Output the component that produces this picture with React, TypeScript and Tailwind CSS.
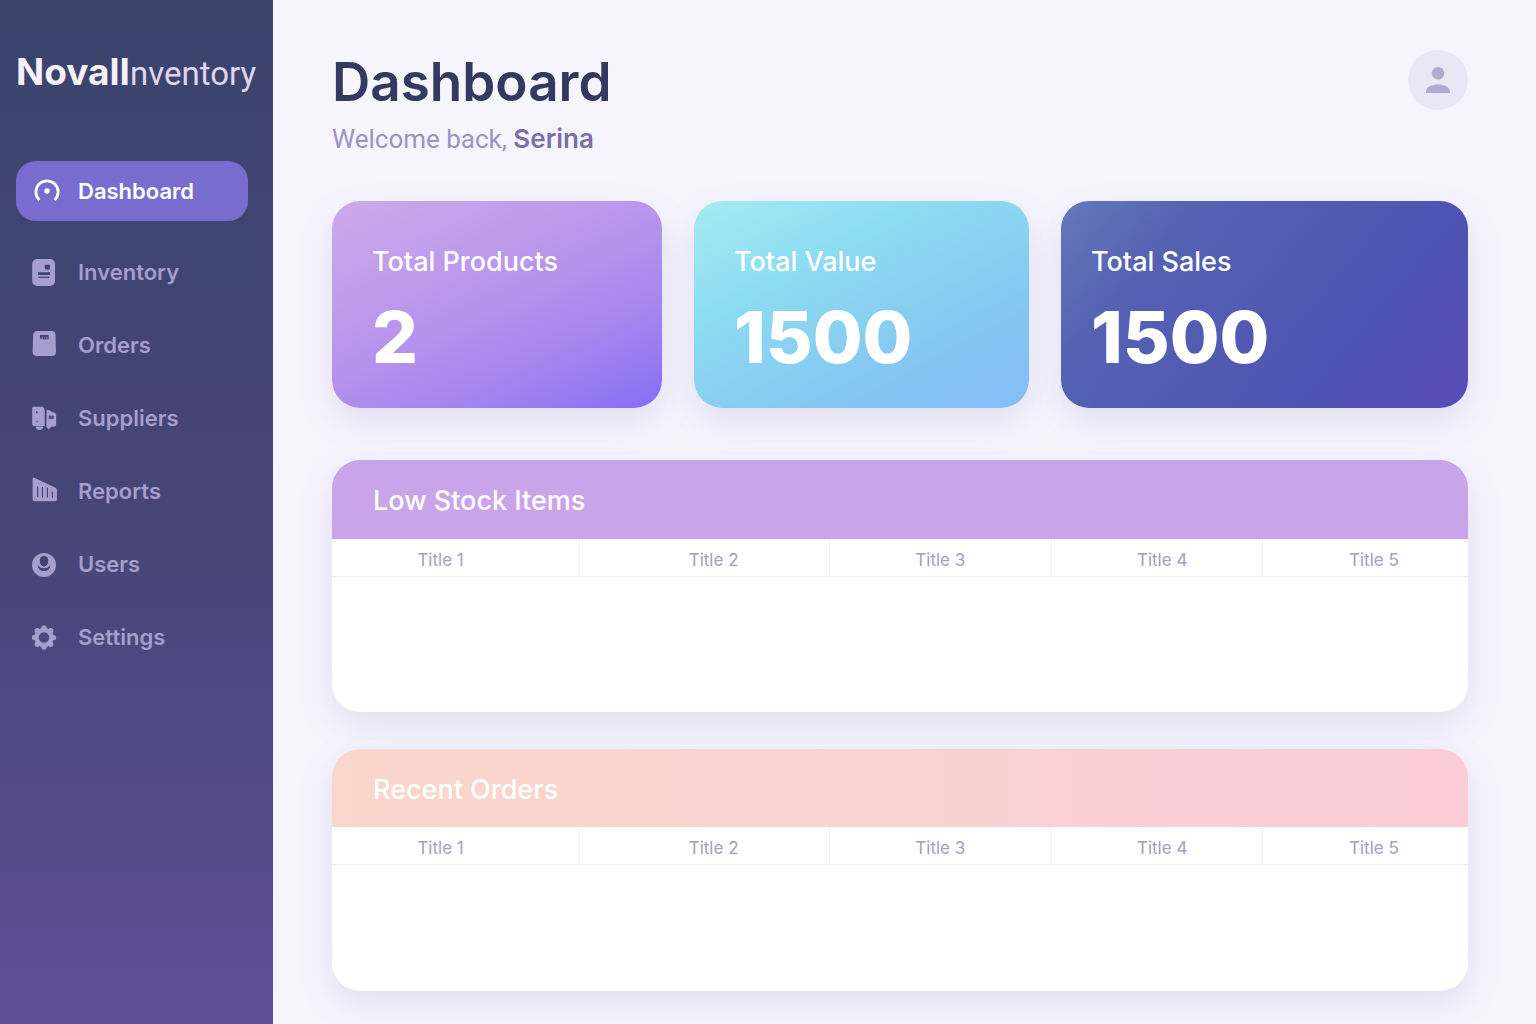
import React from "react";

type IconProps = { children: React.ReactNode };

function Icon({ children }: IconProps) {
  return (
    <svg viewBox="0 0 30 30" className="size-[30px] shrink-0" fill="currentColor" aria-hidden="true">
      {children}
    </svg>
  );
}

const HOLE = "#40416f";

const gearPoints = Array.from({ length: 8 }, (_, i) => {
  const a = (i * Math.PI) / 4;
  return { x: 12 + 9.6 * Math.sin(a), y: 15.5 - 9.6 * Math.cos(a) };
});

const navItems: { label: string; icon: React.ReactNode }[] = [
  {
    label: "Dashboard",
    icon: (
      <Icon>
        <path d="M7.4 24A11.1 11.1 0 1 1 22.6 24" fill="none" stroke="currentColor" strokeWidth="2.8" />
        <circle cx="15" cy="15" r="2.7" />
      </Icon>
    ),
  },
  {
    label: "Inventory",
    icon: (
      <Icon>
        <rect x="0.2" y="2" width="22.8" height="27" rx="5" />
        <rect x="12.8" y="7.8" width="5.2" height="4.6" rx="0.8" fill={HOLE} />
        <rect x="6" y="15.3" width="12" height="2.7" fill={HOLE} />
        <rect x="6.5" y="19.7" width="10.8" height="1.2" fill={HOLE} />
      </Icon>
    ),
  },
  {
    label: "Orders",
    icon: (
      <Icon>
        <path d="M5 1H20Q23.2 1 23.5 4.5L24 21.5Q24 26 19.5 26H5Q.6 26 .6 21.5L1.2 4.5Q1.5 1 5 1Z" />
        <path d="M8 5h8.6v4.4h-1.3V6.6h-.7v2.8h-1.5V6.6h-.6v2.8H11V6.6h-.6v2.5H9.2V7L8 9.4Z" fill={HOLE} />
      </Icon>
    ),
  },
  {
    label: "Suppliers",
    icon: (
      <Icon>
        <path d="M1.5 3.7H10Q12.7 4.4 12.7 7V23H2Q.2 23 .2 21V5Q.2 3.7 1.5 3.7Z" />
        <path d="M3.6 23.6H11.4Q11 27 7.5 27T3.6 23.6Z" />
        <path d="M14.6 6.8 18 7.4 19.4 8.8 23.2 10Q24.2 10.6 24.2 12V21.5Q24.2 23 22.6 23.4L19 23.8 16.8 26.6 14.4 24Z" />
        <rect x="16.9" y="12.6" width="1.9" height="3.3" rx="0.5" fill={HOLE} />
        <rect x="19.5" y="12.6" width="2.1" height="3.3" rx="0.5" fill={HOLE} />
        <circle cx="4.9" cy="9.2" r="0.9" fill={HOLE} />
        <circle cx="4.9" cy="18.6" r="0.6" fill={HOLE} />
      </Icon>
    ),
  },
  {
    label: "Reports",
    icon: (
      <Icon>
        <path d="M2.2 1.7 23.6 11.8Q24.9 12.4 24.9 13.8V23.5Q24.9 25.2 23.2 25.2H2.3Q.6 25.2 .6 23.5V3Q.6 1.3 2.2 1.7Z" />
        <path d="M5.6 10.3V21M10.5 11V21.4M15.4 11.6V21.4M20.3 15.8V21.8" fill="none" stroke={HOLE} strokeWidth="1.1" />
      </Icon>
    ),
  },
  {
    label: "Users",
    icon: (
      <Icon>
        <circle cx="12" cy="16" r="12" />
        <path d="M5.6 16.4Q8.4 19.2 12 19.2T18.4 16.4Q17.6 22 12 22T5.6 16.4Z" fill={HOLE} />
        <ellipse cx="12" cy="12.1" rx="4.3" ry="5.3" fill={HOLE} />
      </Icon>
    ),
  },
  {
    label: "Settings",
    icon: (
      <Icon>
        <circle cx="12" cy="15.5" r="7.5" fill="none" stroke="currentColor" strokeWidth="4.6" />
        {gearPoints.map((p, i) => (
          <circle key={i} cx={p.x} cy={p.y} r="2.6" />
        ))}
      </Icon>
    ),
  },
];

function Sidebar() {
  return (
    <aside className="flex w-[273px] shrink-0 flex-col bg-linear-to-b from-[#3a446b] via-[#464577] to-[#5e4e95] px-4 pt-[48px]">
      <div className="flex items-baseline whitespace-nowrap leading-[48px]">
        <span className="text-[37px] font-bold text-[#f6f1f8]">NovalI</span>
        <span className="font-['Roboto',sans-serif] text-[33px] font-normal text-[#ddd6ee]">nventory</span>
      </div>
      <nav className="mt-[63px] flex flex-col gap-[13px]" aria-label="Main">
        {navItems.map(({ label, icon }, i) => (
          <a
            key={label}
            href={`#${label.toLowerCase()}`}
            aria-current={i === 0 ? "page" : undefined}
            className={
              i === 0
                ? "mb-2 mr-[9px] flex h-[60px] items-center gap-4 rounded-[20px] bg-[#786dcf] px-4 text-[22px] font-semibold text-white"
                : "mr-[9px] flex h-[60px] items-center gap-4 px-4 text-[22px] font-semibold text-[#a69ecc]"
            }
          >
            {icon}
            {label}
          </a>
        ))}
      </nav>
    </aside>
  );
}

const stats = [
  {
    label: "Total Products",
    value: "2",
    look: "bg-[linear-gradient(155deg,#cdaaea_0%,#b795ec_45%,#a886ee_70%,#866ff5_100%)] pl-10",
  },
  {
    label: "Total Value",
    value: "1500",
    look: "bg-[linear-gradient(152deg,#a5ebf1_0%,#8cdcf2_32%,#88cff1_56%,#84c4f3_75%,#85bdf6_100%)] pl-10",
  },
  {
    label: "Total Sales",
    value: "1500",
    look: "bg-[linear-gradient(130deg,#6378ba_0%,#5562b3_24%,#4d53b2_72%,#5b4bb8_100%)] pl-[30px]",
  },
];

const columns = [
  { title: "Title 1", look: "w-[21.8%] pr-[30px]" },
  { title: "Title 2", look: "w-[22%] border-l pl-[18px]" },
  { title: "Title 3", look: "w-[19.5%] border-l" },
  { title: "Title 4", look: "w-[18.6%] border-l pl-[11px]" },
  { title: "Title 5", look: "border-l pl-[17px]" },
];

function Panel({ title, header, body }: { title: string; header: string; body: string }) {
  return (
    <section className="overflow-hidden rounded-[28px] bg-white shadow-[0_12px_36px_rgba(90,70,150,0.13)]">
      <h2 className={`px-[41px] text-[27px] font-medium text-white ${header}`}>{title}</h2>
      <table className="w-full table-fixed border-collapse" aria-label={title}>
        <thead>
          <tr className="h-[37px] border-b border-[#f0eff3]">
            {columns.map((c) => (
              <th
                key={c.title}
                scope="col"
                className={`border-[#f0eff3] pt-[6px] text-center text-[17px] leading-[30px] font-normal text-[#a49dc4] ${c.look}`}
              >
                {c.title}
              </th>
            ))}
          </tr>
        </thead>
        <tbody>
          <tr className={body}>
            <td colSpan={5} />
          </tr>
        </tbody>
      </table>
    </section>
  );
}

export default function App() {
  return (
    <div className="flex min-h-screen bg-[#f6f5fe] font-['Inter',sans-serif]">
      <Sidebar />
      <main className="min-w-0 flex-1 pt-[50px] pr-[68px] pb-[33px] pl-[59px]">
        <header className="flex items-start justify-between">
          <div>
            <h1 className="text-[53px] leading-[64px] font-semibold text-[#343960]">Dashboard</h1>
            <p className="mt-[9px] text-[26px] leading-8 text-[#9c94bf]">
              <span className="font-['Roboto',sans-serif]">Welcome back, </span>
              <strong className="font-semibold text-[#7a6fa6]">Serina</strong>
            </p>
          </div>
          <button
            type="button"
            aria-label="Account"
            className="flex size-[60px] items-center justify-center rounded-full bg-[#e9e7f5] text-[#b4abd1]"
          >
            <svg viewBox="0 0 24 26" className="h-[26px] w-6" fill="currentColor" aria-hidden="true">
              <circle cx="12" cy="6.3" r="6.3" />
              <path d="M0 26V24.5C0 20 6 17.6 12 17.6S24 20 24 24.5V26Z" />
            </svg>
          </button>
        </header>

        <section className="mt-[46px] grid grid-cols-[330fr_335fr_407fr] gap-8" aria-label="Totals">
          {stats.map((s) => (
            <div
              key={s.label}
              className={`rounded-[28px] pt-[43px] pb-[29px] text-white shadow-[0_14px_36px_rgba(90,70,150,0.13)] ${s.look}`}
            >
              <p className="text-[27px] leading-9 font-medium">{s.label}</p>
              <p className="mt-[15px] text-[72px] leading-[84px] font-extrabold">{s.value}</p>
            </div>
          ))}
        </section>

        <div className="mt-[52px] flex flex-col gap-[37px]">
          <Panel title="Low Stock Items" header="bg-[#caa4e9] pt-[2px] leading-[77px]" body="h-[136px]" />
          <Panel
            title="Recent Orders"
            header="bg-linear-to-r from-[#fad6cc] to-[#facdd8] pt-1 leading-[74px]"
            body="h-[127px]"
          />
        </div>
      </main>
    </div>
  );
}
